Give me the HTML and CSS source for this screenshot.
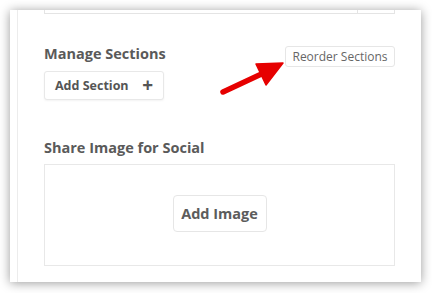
FILE: index.html
```html
<!DOCTYPE html>
<html lang="en">
<head>
    <meta charset="UTF-8">
    <meta name="viewport" content="width=device-width, initial-scale=1.0">
    <title>Manage Sections</title>
    <link rel="stylesheet" href="styles.css">
</head>
<body>
    <div class="frame">
        <div class="panel">
            <div class="inner">
                <div class="field-stub">
                    <span class="stub-main"></span>
                    <span class="stub-addon"></span>
                </div>

                <div class="section-row">
                    <h2>Manage Sections</h2>
                    <button class="btn-light">Reorder Sections</button>
                </div>
                <button class="btn-add">Add Section <span class="plus">+</span></button>

                <h2 class="social-title">Share Image for Social</h2>
                <div class="image-box">
                    <button class="btn-image">Add Image</button>
                </div>
            </div>

            <!-- annotation arrow pointing at the reorder button -->
            <svg class="arrow" width="75" height="45" viewBox="0 0 75 45">
                <line x1="9" y1="37" x2="56" y2="15" stroke="#e60000" stroke-width="5.5" stroke-linecap="round"/>
                <polygon points="69,8 42,9 52,30" fill="#e60000" stroke="#e60000" stroke-width="1.5" stroke-linejoin="round"/>
            </svg>
        </div>
    </div>
</body>
</html>
```

FILE: styles.css
```css
body {
    margin: 0;
    padding: 0;
    background-color: #fff;
    font-family: "Open Sans", Arial, sans-serif;
}

.frame {
    width: 432px;
    height: 293px;
    padding: 10px 11px 11px 10px;
    box-sizing: border-box;
}

.panel {
    position: relative;
    height: 272px;
    background-color: #fff;
    box-shadow: 0 1px 10px rgba(0, 0, 0, 0.4);
    overflow: hidden;
}

.inner {
    margin-left: 7px;
    height: 100%;
    padding: 0 26px 0 26px;
    border-left: 1px solid #ececec;
    display: flex;
    flex-direction: column;
    align-items: flex-start;
}

.field-stub {
    display: flex;
    width: 100%;
    height: 4px;
}

.stub-main {
    flex: 1;
    border: 1px solid #e4e4e4;
    border-top: none;
}

.stub-addon {
    width: 36px;
    border: 1px solid #e4e4e4;
    border-top: none;
    border-left: none;
}

.section-row {
    display: flex;
    justify-content: space-between;
    align-items: flex-start;
    width: 100%;
    margin-top: 30px;
}

h2 {
    margin: 0;
    font-size: 14.5px;
    line-height: 20px;
    font-weight: 700;
    color: #5a5a5a;
}

.btn-light {
    margin-top: 2px;
    height: 21px;
    width: 110px;
    padding: 0;
    border: 1px solid #e6e6e6;
    border-radius: 3px;
    background-color: #fff;
    font-family: "Open Sans", Arial, sans-serif;
    font-size: 12px;
    color: #666;
}

.btn-add {
    margin-top: 4px;
    height: 29px;
    width: 120px;
    padding: 0 10px;
    display: flex;
    align-items: center;
    justify-content: space-between;
    border: 1px solid #e8e8e8;
    border-radius: 3px;
    background-color: #fff;
    box-shadow: 0 1px 2px rgba(0, 0, 0, 0.05);
    font-family: "Open Sans", Arial, sans-serif;
    font-size: 12.5px;
    font-weight: 700;
    color: #555;
}

.plus {
    font-size: 19px;
    font-weight: 700;
    line-height: 1;
}

.social-title {
    margin-top: 38px;
}

.image-box {
    margin-top: 6px;
    width: 100%;
    height: 102px;
    box-sizing: border-box;
    border: 1px solid #e8e8e8;
    display: flex;
    align-items: center;
    justify-content: center;
}

.btn-image {
    margin-top: -4px;
    height: 37px;
    width: 94px;
    padding: 0;
    border: 1px solid #e6e6e6;
    border-radius: 4px;
    background-color: #fff;
    font-family: "Open Sans", Arial, sans-serif;
    font-size: 14.5px;
    font-weight: 700;
    color: #5c5c5c;
}

.arrow {
    position: absolute;
    left: 204px;
    top: 45px;
}
```
